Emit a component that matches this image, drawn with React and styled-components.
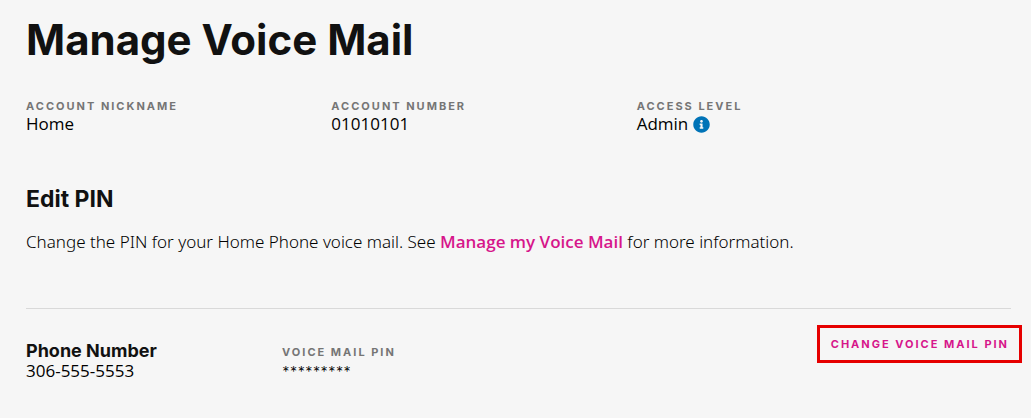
import React from 'react'
import styled, { createGlobalStyle } from 'styled-components'
import { FaInfoCircle } from 'react-icons/fa'

const App = () => {
  return (
    <>
      <GlobalStyle />
      <Page>
        <Title>Manage Voice Mail</Title>
        <Account>
          <Field>
            <Label>Account Nickname</Label>
            <Value>Home</Value>
          </Field>
          <Field>
            <Label>Account Number</Label>
            <Value>01010101</Value>
          </Field>
          <Field>
            <Label>Access Level</Label>
            <Value>
              Admin
              <Info type='button' aria-label='About access levels'>
                <FaInfoCircle />
              </Info>
            </Value>
          </Field>
        </Account>
        <Subtitle>Edit PIN</Subtitle>
        <Text>
          Change the PIN for your Home Phone voice mail. See{' '}
          <a href='#voice-mail'>Manage my Voice Mail</a> for more information.
        </Text>
        <Phone>
          <div>
            <PhoneTitle>Phone Number</PhoneTitle>
            <PhoneValue>306-555-5553</PhoneValue>
          </div>
          <Pin>
            <Label>Voice Mail PIN</Label>
            <Masked>*********</Masked>
          </Pin>
          <Button type='button'>Change Voice Mail PIN</Button>
        </Phone>
      </Page>
    </>
  )
}

export default App

const GlobalStyle = createGlobalStyle`
  * {
    box-sizing: border-box;
  }

  body {
    margin: 0;
    color: #111;
    background: #f6f6f6;
    font-family: 'Open Sans', sans-serif;
    font-size: 17px;
  }

  h1, h2, h3, p, dl, dt, dd {
    margin: 0;
  }
`

const Page = styled.main`
  padding: 16px 20px 32px 26px;
`

const Title = styled.h1`
  font-family: Inter, sans-serif;
  font-size: 42px;
  font-weight: 700;
  line-height: 48px;
`

const Account = styled.dl`
  display: grid;
  grid-template-columns: 31% 31% 1fr;
  margin-top: 34px;
`

const Field = styled.div`
  min-width: 0;
`

const Label = styled.dt`
  color: #757575;
  font-family: Inter, sans-serif;
  font-size: 11px;
  font-weight: 700;
  line-height: 16px;
  letter-spacing: 2px;
  text-transform: uppercase;
`

const Value = styled.dd`
  display: flex;
  align-items: center;
  gap: 5px;
  color: #000;
  line-height: 20px;
`

const Masked = styled(Value)`
  font-family: Lato, sans-serif;
  font-size: 18px;
  line-height: 24px;
`

const Info = styled.button`
  display: flex;
  padding: 0;
  border: none;
  cursor: pointer;
  background: none;
  color: #0073b7;
  font-size: 17px;
`

const Subtitle = styled.h2`
  margin-top: 51px;
  font-family: Inter, sans-serif;
  font-size: 23px;
  font-weight: 700;
  line-height: 28px;
`

const Text = styled.p`
  margin-top: 16px;
  color: #000;
  font-family: 'Noto Sans', 'Open Sans', sans-serif;
  font-weight: 300;
  line-height: 26px;

  a {
    color: #d6168b;
    font-family: 'Open Sans', sans-serif;
    font-weight: 600;
    text-decoration: none;
  }
`

const Phone = styled.section`
  display: grid;
  grid-template-columns: 26% 1fr auto;
  align-items: start;
  margin-top: 53px;
  padding-top: 16px;
  border-top: 1px solid #d9d9d9;

  > div {
    padding-top: 16px;
  }
`

const Pin = styled.dl`
  padding-top: 19px;
`

const PhoneTitle = styled.h3`
  font-family: Inter, sans-serif;
  font-size: 18px;
  font-weight: 700;
  line-height: 20px;
`

const PhoneValue = styled.p`
  color: #000;
  line-height: 20px;
`

const Button = styled.button`
  margin-right: -11px;
  padding: 8px 10px 8px 11px;
  border: 3px solid #e60000;
  cursor: pointer;
  background: none;
  color: #d6168b;
  font-family: Inter, sans-serif;
  font-size: 11px;
  font-weight: 700;
  line-height: 16px;
  letter-spacing: 2px;
  text-transform: uppercase;
`
